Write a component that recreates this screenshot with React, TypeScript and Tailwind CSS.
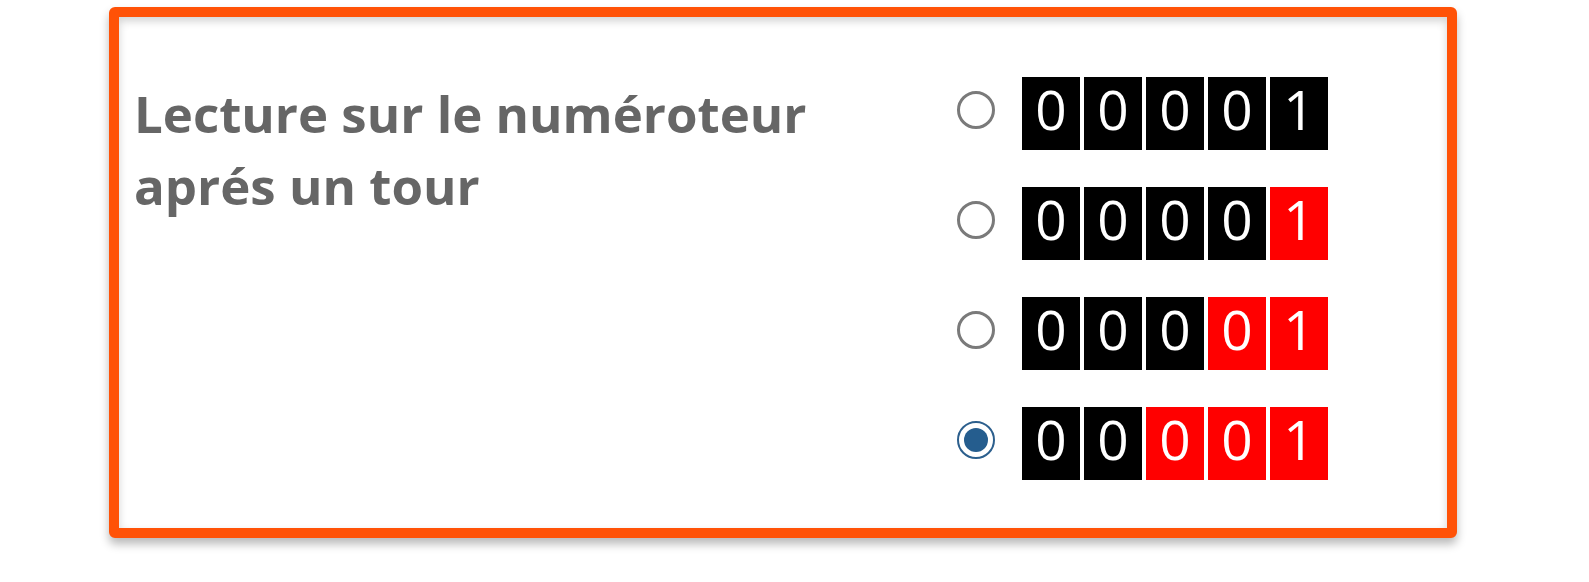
import clsx from 'clsx';

type Reading = { digits: string; red: number; checked?: boolean };

const READINGS: Reading[] = [
  { digits: '00001', red: 0 },
  { digits: '00001', red: 1 },
  { digits: '00001', red: 2 },
  { digits: '00001', red: 3, checked: true },
];

/**
 * Radio dot drawn by hand so the ring keeps its size
 */
const Radio = ({ checked }: { checked?: boolean }) =>
  checked ? (
    <span className="block shrink-0 w-[38px] h-[38px] rounded-full border-[2px] border-[#2c5f8d] bg-white flex items-center justify-center">
      <span className="block w-[24px] h-[24px] rounded-full bg-[#255d8e]" />
    </span>
  ) : (
    <span className="block shrink-0 w-[38px] h-[38px] rounded-full border-[3px] border-[#7a7a7a] bg-white" />
  );

/**
 * Counter wheels: last `red` cells are highlighted
 */
const Counter = ({ digits, red }: { digits: string; red: number }) => (
  <div className="flex gap-[4px] shrink-0">
    {digits.split('').map((d, i) => (
      <div
        key={i}
        className={clsx(
          'w-[58px] h-[73px] flex justify-center text-white text-[55px] leading-[60px] pt-[2px]',
          i >= digits.length - red ? 'bg-[#ff0000]' : 'bg-black',
        )}
      >
        {d}
      </div>
    ))}
  </div>
);

const App = () => {
  return (
    <div className="w-full h-screen bg-white pl-[109px] pt-[7px] font-['Open_Sans',sans-serif]">
      <div className="w-[1348px] h-[531px] border-[10px] border-[#ff5207] rounded-[6px] bg-white shadow-[0_6px_10px_rgba(0,0,0,0.28)] flex">
        <div className="w-full h-full flex shadow-[inset_0_4px_8px_rgba(0,0,0,0.18)]">
          <div className="w-[838px] shrink-0 pl-[15px] pt-[60px]">
            <h2 className="text-[#666666] text-[51px] font-bold leading-[72px] m-0">
              Lecture sur le numéroteur
              <br />
              aprés un tour
            </h2>
          </div>
          <ul className="list-none flex flex-col gap-[37px] pt-[60px]">
            {READINGS.map((r, i) => (
              <li key={i} className="flex items-center gap-[27px] h-[73px]">
                <div className="-mt-[7px] shrink-0">
                  <Radio checked={r.checked} />
                </div>
                <Counter digits={r.digits} red={r.red} />
              </li>
            ))}
          </ul>
        </div>
      </div>
    </div>
  );
};

export default App;
